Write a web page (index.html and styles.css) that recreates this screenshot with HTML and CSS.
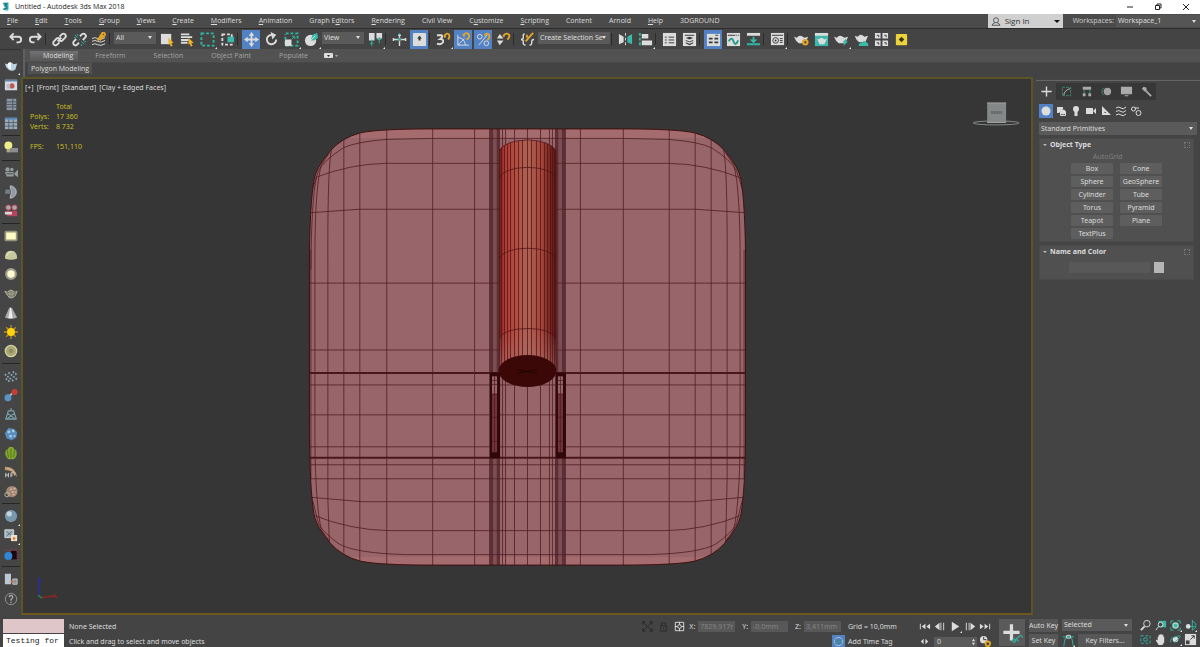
FILE: index.html
```html
<!DOCTYPE html>
<html lang="en">
<head>
<meta charset="utf-8">
<title>Untitled - Autodesk 3ds Max 2018</title>
<link rel="stylesheet" href="styles.css">
</head>
<body>
<header class="titlebar">
  <svg class="logo" viewBox="0 0 12 12"><path d="M2 1h7v8l-2 2H5V9H2l2-3z" fill="#9ad6d6"/><path d="M3 2h4l-2 2.500q3 .5 1.500 3L3 9" fill="none" stroke="#12808c" stroke-width="2"/><path d="M8 1v9" stroke="#35a5ad" stroke-width="1.500"/></svg>
  <h1>Untitled - Autodesk 3ds Max 2018</h1>
  <div class="window-buttons">
    <button aria-label="Minimize"><svg viewBox="0 0 10 10"><path d="M2 5h6" stroke="#222"/></svg></button>
    <button aria-label="Restore"><svg viewBox="0 0 10 10"><path d="M2.500 3.500h4v4h-4zM4 3.500v-1.500h4v4H6.500" fill="none" stroke="#222"/></svg></button>
    <button aria-label="Close"><svg viewBox="0 0 10 10"><path d="M2 2l6 6M8 2l-6 6" stroke="#222"/></svg></button>
  </div>
</header>

<nav class="menubar">
  <div class="menus">
    <button><u>F</u>ile</button><button><u>E</u>dit</button><button><u>T</u>ools</button><button><u>G</u>roup</button><button><u>V</u>iews</button><button><u>C</u>reate</button><button><u>M</u>odifiers</button><button><u>A</u>nimation</button><button>Graph E<u>d</u>itors</button><button><u>R</u>endering</button><button>Civil View</button><button>C<u>u</u>stomize</button><button><u>S</u>cripting</button><button>Content</button><button>Arnold</button><button><u>H</u>elp</button><button>3DGROUND</button>
  </div>
  <button class="signin"><svg viewBox="0 0 12 12"><circle cx="6" cy="4.500" r="3" fill="none" stroke="#444"/><path d="M1.500 10.500q0-2 3-3M10.500 10.500q0-2-3-3M1 10.500h10" fill="none" stroke="#444"/></svg><span>Sign In</span><i class="caret"></i></button>
  <label class="workspaces" for="ws">Workspaces:</label>
  <span class="drop ws"><select id="ws"><option>Workspace_1</option></select></span>
</nav>

<div class="toolbar">
  <button aria-label="Undo"><svg viewBox="0 0 16 16"><path class="l2" d="M3 5h8q3 0 3 3t-3 3H9M6 1.500L2.500 5 6 8.500"/></svg></button>
  <button aria-label="Redo"><svg viewBox="0 0 16 16"><path class="l2" d="M13 5H5Q2 5 2 8t3 3h2M10 1.500L13.500 5 10 8.500"/></svg></button>
  <i class="sep"></i>
  <button aria-label="Link"><svg viewBox="0 0 16 16"><path class="l2" d="M8 5l2.500-2.500a2.300 2.300 0 0 1 3.500 3.500L11 9a2.300 2.300 0 0 1-3 0M8 11l-2.500 2.500A2.300 2.300 0 0 1 2 10L5 7a2.300 2.300 0 0 1 3 0M6 10l4-4"/></svg></button>
  <button aria-label="Unlink"><svg viewBox="0 0 16 16"><path class="l2" d="M8.500 4.500l2-2a2.300 2.300 0 0 1 3.500 3.500l-2.500 2.500M7.500 11.500l-2 2A2.300 2.300 0 0 1 2 10l2.500-2.500"/><path class="t" d="M3 3l3 3M6 2v2M2 6h2M10 10l3 3M10 13v2M13 10h2M7 9l2-2"/></svg></button>
  <button aria-label="Bind to Space Warp"><svg viewBox="0 0 16 16"><path class="l" d="M0 7q3-2 6 0t8-1M0 10q3-2 6 0t8-1M0 13.500q3-2 6 0t8-1"/><path class="y" d="M6 9l5-8q3-1 3 2L8 9M9 6l3-3"/></svg></button>
  <i class="sep"></i>
  <span class="drop w44"><select aria-label="Selection Filter"><option>All</option></select></span>
  <button aria-label="Select Object"><svg viewBox="0 0 16 16"><path class="f" d="M1 2h11v11H1z"/><path class="fy" d="M9 6l5.500 5.500-2.500.500 1.500 3-2 .5-1-3-1.500 1z"/></svg></button>
  <button aria-label="Select by Name"><svg viewBox="0 0 16 16"><path class="l2" d="M1 2.500h9M1 5.500h12M1 8.500h8M1 11.500h7"/><path class="fy" d="M9 6l5.500 5.500-2.500.500 1.500 3-2 .5-1-3-1.500 1z"/></svg></button>
  <button class="fly" aria-label="Selection Region"><svg viewBox="0 0 16 16"><path class="t dash" d="M1.500 1.500h13v13h-13z"/></svg></button>
  <button aria-label="Window Crossing"><svg viewBox="0 0 16 16"><path class="l dash" d="M2.500 2.500h10v11h-10z"/><path class="ft" d="M8 5h7v6H8z"/></svg></button>
  <i class="sep"></i>
  <button class="on" aria-label="Move"><svg viewBox="0 0 16 16"><path class="l2" d="M8 3v10M3 8h10"/><path class="f" d="M8 0l3 4H5zM8 16l3-4H5zM0 8l4-3v6zM16 8l-4-3v6z"/></svg></button>
  <button aria-label="Rotate"><svg viewBox="0 0 16 16"><path class="l2" d="M10 3.500A5 5 0 1 0 13 8"/><path class="f" d="M7 0l6 3-4 5z"/></svg></button>
  <button class="fly" aria-label="Scale"><svg viewBox="0 0 16 16"><path class="t dash" d="M2 1.500h12.500v13h-13V2"/><path class="f" d="M1 8h7v7H1z"/><path class="t" d="M8 8l3-3M8.500 4.500h3v3"/></svg></button>
  <button class="fly" aria-label="Place"><svg viewBox="0 0 16 16"><circle class="f" cx="7" cy="9" r="6"/><path class="ft" d="M7 9l2-6 5-2 1 5-4 3z"/><path class="l" d="M7 9l5-5"/></svg></button>
  <span class="drop w44"><select aria-label="Reference Coordinate System"><option>View</option></select></span>
  <button class="fly" aria-label="Pivot Center"><svg viewBox="0 0 16 16"><path class="f" d="M1 1h6v8H1zM9 1h6v6H9z"/><path class="t" d="M4 8v7M2 12h4M12 5v7M10 8h4"/></svg></button>
  <i class="sep"></i>
  <button aria-label="Manipulate"><svg viewBox="0 0 16 16"><path class="l" stroke-width="1.500" d="M8 2v13M1 8h14M6.500 3.500h3M1.500 6.500v3M14.500 6.500v3"/><path class="t" d="M8 6v4M6 8h4M8 1v2"/></svg></button>
  <button class="on" aria-label="Keyboard Shortcut Override"><svg viewBox="0 0 16 16"><rect class="f" x="1" y="1" width="14" height="14" rx="1"/><path d="M8 4l2.500 3H9v2H7V7H5.500z" fill="#333"/></svg></button>
  <i class="sep"></i>
  <button class="fly" aria-label="Snaps Toggle"><svg viewBox="0 0 16 16"><path class="l2" d="M1 3.500h5Q8 5 4.500 7.500q4 0 3 3.500-2 3-6.500 1.500"/><path class="y" d="M10 6l-1-2q3-4 5-1 1 2-1 5"/></svg></button>
  <button class="on" aria-label="Angle Snap"><svg viewBox="0 0 16 16"><path class="l" d="M2 3v11h12M2 6q7 0 8 8M2 14l7-7"/><path class="y" d="M9 5l-1-2q3-3 5-1t0 5l-2 1"/></svg></button>
  <button class="on" aria-label="Percent Snap"><svg viewBox="0 0 16 16"><circle class="l" cx="4" cy="5" r="2.500"/><circle class="l" cx="11" cy="12" r="2.500"/><path class="l" d="M12 3L3 14"/><path class="y" d="M9 4q2-4 5-1 1 3-2 6"/></svg></button>
  <button aria-label="Spinner Snap"><svg viewBox="0 0 16 16"><path class="f" d="M4 2l4 5H1zM4 14l4-5H1z"/><path class="y" d="M9 5l-1-1q3-4 6-1 1 3-2 5"/></svg></button>
  <i class="sep"></i>
  <button aria-label="Named Selection Sets"><svg viewBox="0 0 16 16"><path class="l" stroke-width="1.500" d="M5 2Q3 2 3.500 5T1 8q3 0 2.500 3T6 14M10 14q3 0 2.500-3T15 8"/><path class="y" d="M6 10l6-7 2-2M8 6l-1-3"/></svg></button>
  <span class="drop w74"><select aria-label="Named Selection"><option>Create Selection Se</option></select></span>
  <i class="sep"></i>
  <button aria-label="Mirror"><svg viewBox="0 0 16 16"><path class="f" d="M1 2l5 3v6l-5 2z"/><path class="ft" d="M15 2l-5 3v6l5 2z"/><path class="l" stroke-dasharray="3 2" d="M8 1v14"/></svg></button>
  <button class="fly" aria-label="Align"><svg viewBox="0 0 16 16"><path class="t dash" d="M2 1v14"/><path class="f" d="M4 2h7v5H4zM4 9h11v5H4z"/></svg></button>
  <i class="sep"></i>
  <button aria-label="Scene Explorer"><svg viewBox="0 0 16 16"><path class="f" d="M1 1h14v14H1z"/><path class="k" d="M3 5.500h2M7 5.500h6M3 8.500h2M7 8.500h6M3 11.500h2M7 11.500h6"/></svg></button>
  <button aria-label="Layer Explorer"><svg viewBox="0 0 16 16"><path class="f" d="M1 1h14v14H1z"/><path class="k" d="M3 3.500h10"/><path d="M8 5l4 1.500L8 8 4 6.500zM4 8.500L8 10l4-1.500v1L8 11 4 9.500zM4 11l4 1.500 4-1.500v1L8 14l-4-2z" fill="#383838"/></svg></button>
  <i class="sep"></i>
  <button class="on" aria-label="Toggle Ribbon"><svg viewBox="0 0 16 16"><path class="f" d="M1 2h14v13H1z"/><path class="k2" d="M3 7h4M9 7h4M3 11h4M9 11h4"/><path class="k" d="M10 3.500h3"/></svg></button>
  <button aria-label="Curve Editor"><svg viewBox="0 0 16 16"><path class="f" d="M1 1h14v14H1z"/><path class="k" stroke-dasharray="8 1 1 1" d="M2 3.500h12"/><path d="M3 10q3-6 5 0t5-1" fill="none" stroke="#20998a" stroke-width="2"/></svg></button>
  <button aria-label="Schematic View"><svg viewBox="0 0 16 16"><path class="f" d="M1 1h14v3H1z"/><path class="t2" d="M8 5v4M1 13h14"/><path class="ft" d="M4 8h8l-4 4z"/></svg></button>
  <i class="sep"></i>
  <button class="fly" aria-label="Material Editor"><svg viewBox="0 0 16 16"><path class="f" d="M1 1h14v13H1z"/><path class="k" d="M2 3.500h12M10.500 7h3M10.500 9h3M10.500 11h3"/><circle class="k" cx="6" cy="9" r="3"/><circle cx="6" cy="9" r="1" fill="#333"/></svg></button>
  <i class="sep"></i>
  <button aria-label="Render Setup"><svg viewBox="0 0 16 16"><path class="f" d="M0 5l3 1q3-4 8 0l4-1-3 7H5Q2 10 0 5z"/><circle cx="12" cy="11" r="3.500" fill="#dda52c"/><circle cx="12" cy="11" r="1.200" fill="#444"/></svg></button>
  <button aria-label="Rendered Frame"><svg viewBox="0 0 16 16"><path class="ft" d="M1 1h14v14H1z"/><path class="f" d="M1 1h14v3H1zM3 7l2 1q3-3 6 0l3-1-3 6H6z"/></svg></button>
  <button class="fly" aria-label="Render Production"><svg viewBox="0 0 16 16"><path class="f" d="M0 5l3 1q3-4 8 0l4-1-3 7H5Q2 10 0 5z"/><path class="ft" d="M13 7l-4 4h2l-1 4 5-5h-2z"/></svg></button>
  <button aria-label="Cloud Render"><svg viewBox="0 0 16 16"><path class="f" d="M1 4l3 1q3-4 7 0l4-1-3 7H6Q2 9 1 4z"/><path class="ft" d="M5 15q0-4 3-3 2-4 5-1 3 1 2 4z"/></svg></button>
  <button aria-label="Autodesk Gallery"><svg viewBox="0 0 16 16"><path class="f" d="M1 1h6v6H1zM9 1h6v6H9zM1 9h6v6H1zM9 9h6v6H9z"/><path class="k" d="M3 3.500h2v2M11 3.500h2v2M3 11.500h2v2M11 11.500h2v2"/></svg></button>
  <button aria-label="Arnold Plugin"><svg viewBox="0 0 16 16"><rect x="2" y="2" width="12" height="12" rx="1" fill="#ecd33c"/><path d="M8 5l3 3-3 3-3-3z" fill="#3a3410"/></svg></button>
</div>

<main class="workspace">
  <aside class="sidebar">
    <button class="fly" aria-label="Teapot"><svg viewBox="0 0 16 16"><path d="M1 5l3 1q4-4 7 0l4-1-2 7q-4 3-8 0-3-2-4-7z" fill="#bcd3e4"/><path d="M4 6q1-3 4-2v8q-4-1-4-6z" fill="#f6f9fb"/></svg></button>
    <button aria-label="Render Frame"><svg viewBox="0 0 16 16"><path d="M1 2h14v12H1z" fill="#d5dbe0"/><path d="M1 2h14v2H1z" fill="#6385ab"/><circle cx="9" cy="9" r="3" fill="#c45850"/><path d="M3 7h4v5H3z" fill="#b7bfc7"/></svg></button>
    <button aria-label="List"><svg viewBox="0 0 16 16"><path d="M3 2h11v13H3z" fill="#8b97a5"/><path d="M3 5.500h11M3 8.500h11M3 11.500h11M10 2v13" stroke="#47525d"/></svg></button>
    <button aria-label="Table"><svg viewBox="0 0 16 16"><path d="M1 2h14v13H1z" fill="#9cabb8"/><path d="M1 2h14v2H1z" fill="#4f87bb"/><path d="M1 7.500h14M1 11.500h14M5.500 4v11M10.500 4v11" stroke="#4e5d6c"/></svg></button>
    <i class="hsep"></i>
    <button aria-label="Light"><svg viewBox="0 0 16 16"><circle cx="5" cy="5" r="4.500" fill="#eeed8c"/><path d="M3 9h4v4H3z" fill="#a9a986"/><path d="M7 8h9v5H7z" fill="#8d8d8d"/></svg></button>
    <i class="hsep"></i>
    <button aria-label="Camera"><svg viewBox="0 0 16 16"><g fill="#939b9b"><circle cx="4" cy="5" r="2.500"/><circle cx="9" cy="5" r="2"/><path d="M1 8h10v5H3zM12 9l4-4v9l-4-3z"/></g><path d="M3 10h7" stroke="#444"/></svg></button>
    <button aria-label="Dome Camera"><svg viewBox="0 0 16 16"><path d="M7 1a7 7 0 0 1 0 14q3-7 0-14z" fill="#9299a2" stroke="#c4c9ce"/><path d="M2 5h5v5H1z" fill="#777f86"/></svg></button>
    <button aria-label="Red Camera"><svg viewBox="0 0 16 16"><circle cx="5" cy="4" r="3" fill="#aaa" stroke="#c3405c"/><circle cx="12" cy="4" r="3" fill="#aaa" stroke="#c3405c"/><path d="M1 8h14v6H4z" fill="#b5455f"/><path d="M1 9h8v3H1z" fill="#d9d9d9"/></svg></button>
    <i class="hsep"></i>
    <button aria-label="Plane Light"><svg viewBox="0 0 16 16"><rect x="1.500" y="3" width="13" height="10" rx="1" fill="#fdfcc5" stroke="#97947a" stroke-width="2"/></svg></button>
    <button aria-label="Dome Light"><svg viewBox="0 0 16 16"><path d="M1 12q0-9 7-9t7 9q-7 3-14 0z" fill="#c6c99c"/><path d="M3 9q2-5 6-5" stroke="#eff0c8" fill="none"/></svg></button>
    <button aria-label="Sphere Light"><svg viewBox="0 0 16 16"><circle cx="8" cy="8" r="5.500" fill="#fcfbd2" stroke="#9f9f8e" stroke-width="2.500"/></svg></button>
    <button aria-label="Mesh Light"><svg viewBox="0 0 16 16"><path d="M1 6l3 1q4-4 8 0l3-1-2 5q-5 5-9 0z" fill="#65675b" stroke="#b8b89d"/><path d="M6 5v9M8 4v10M10 5v9M3 9h10" stroke="#aaa98e"/></svg></button>
    <button aria-label="Cone Light"><svg viewBox="0 0 16 16"><path d="M6 2h3l6 11q-7 3-14 0z" fill="#a9a9a9"/><path d="M7 2h1l2 12H5z" fill="#eee"/></svg></button>
    <button aria-label="Sun"><svg viewBox="0 0 16 16"><path d="M8 0v16M0 8h16M2.500 2.500l11 11M13.500 2.500l-11 11" stroke="#bf8e1d" stroke-width="1.500"/><circle cx="8" cy="8" r="4.500" fill="#ffd40c"/></svg></button>
    <button aria-label="Ambient Light"><svg viewBox="0 0 16 16"><circle cx="8" cy="8" r="6.500" fill="#aaa777" stroke="#d4d0a0" stroke-width="1.500"/><circle cx="8" cy="8" r="2.500" fill="#8f8c60"/></svg></button>
    <i class="hsep"></i>
    <button aria-label="Particles"><svg viewBox="0 0 16 16"><path d="M1 6l10 8M5 4l10 8M2 11l5 4M10 3l5 4" stroke="#8aaabc" stroke-width="2" stroke-dasharray="2 1.500"/></svg></button>
    <button aria-label="Constraint"><svg viewBox="0 0 16 16"><path d="M5 10l6-5" stroke="#b9bfc8" stroke-width="2"/><circle cx="4.500" cy="11" r="4" fill="#5c93c5"/><circle cx="12" cy="4.500" r="3.500" fill="#c73c35"/></svg></button>
    <button aria-label="Bones"><svg viewBox="0 0 16 16"><path d="M8 1v3M5 4.500h6l3 9H2zM4 7l8 6M12 7l-8 6M2 14h12" fill="none" stroke="#7ba0ad" stroke-width="1.300"/></svg></button>
    <button aria-label="Cluster"><svg viewBox="0 0 16 16"><path d="M5 1l6 1 4 4-1 6-5 3-6-2-2-6z" fill="#598bbb"/><path d="M4 4h3v3H4zM9 3h3v3H9zM6 9h3v3H6zM11 9h2v2h-2z" fill="#a5c9e3"/></svg></button>
    <button aria-label="Grass"><svg viewBox="0 0 16 16"><path d="M5 15Q0 11 2 5l2-1 2-3h4l2 3 2 1q2 7-3 10z" fill="#82a82f"/><path d="M8 14V3M5 13L4 5M11 13l1-8" stroke="#4b6b18"/></svg></button>
    <button aria-label="Hair"><svg viewBox="0 0 16 16"><path d="M1 2q12-1 14 12l-2-3-1 2Q10 5 1 6z" fill="#b6956c"/><path d="M3 4q8 1 10 7" fill="none" stroke="#dcc09c"/><path d="M2 9v5M5 9v5M2 11.500h3M8 14V9h3M8 11.500h2" stroke="#ddd" fill="none"/></svg></button>
    <button aria-label="Ornatrix"><svg viewBox="0 0 16 16"><circle cx="9" cy="7.500" r="6.500" fill="#a48773"/><path d="M7 5h2M11 4h2M9 8h2M13 8h1M10 11h2" stroke="#dbc3b0" stroke-width="1.500"/><circle cx="3.500" cy="11" r="2.500" fill="none" stroke="#c4bfb0"/></svg></button>
    <i class="hsep"></i>
    <button class="fly" aria-label="Material Sphere"><svg viewBox="0 0 16 16"><circle cx="8" cy="8" r="7" fill="#7898ac"/><circle cx="6" cy="5.500" r="3" fill="#c0d5e0"/></svg></button>
    <button class="fly" aria-label="Lock"><svg viewBox="0 0 16 16"><path d="M1 2h10v9H1z" fill="#a5b7c3" stroke="#dadada"/><path d="M3 4l6 5M9 4L3 9" stroke="#526370"/><path d="M8 8h7v7H8z" fill="#eee0c8"/><circle cx="11.500" cy="12" r="1.500" fill="#d67627"/></svg></button>
    <button aria-label="Region"><svg viewBox="0 0 16 16"><path d="M8 3h7v10H8z" fill="#1c090d"/><path d="M1 2.500h14v11" stroke="#a53b53" fill="none" stroke-dasharray="2 1"/><circle cx="5" cy="9" r="4.500" fill="#3187d4"/></svg></button>
    <i class="hsep"></i>
    <button aria-label="Panels"><svg viewBox="0 0 16 16"><path d="M1 2h7v12H1z" fill="#b9c8d2"/><path d="M10 8h5v6h-5z" fill="#8b939b" stroke="#ccc"/><circle cx="9" cy="11" r="1.500" fill="#c96b36"/></svg></button>
    <button aria-label="Help"><svg viewBox="0 0 16 16"><circle cx="8" cy="8" r="6.500" fill="none" stroke="#999"/><path d="M6 6q0-2 2-2t2 2q0 1-2 2.500V10M8 11v1.500" fill="none" stroke="#aaa" stroke-width="1.500"/></svg></button>
  </aside>

  <section class="ribbon">
    <div class="tabs">
      <button class="active">Modeling</button><button>Freeform</button><button>Selection</button><button>Object Paint</button><button>Populate</button>
      <button class="minimize" aria-label="Minimize Ribbon"><svg viewBox="0 0 16 8"><rect class="f" x="1" y="1" width="9" height="5" rx="1"/><path d="M4 3h3L5.500 5z" fill="#333"/><path d="M12 3h3l-1.500 2z" fill="#aaa"/></svg></button>
    </div>
    <div class="subtabs"><button>Polygon Modeling</button></div>
  </section>

  <section class="viewport">
    <svg class="scene" viewBox="23 79 1008 535" preserveAspectRatio="xMidYMid meet">
      <defs>
        <clipPath id="body"><path d="M309 270Q309 205 314 178 317 166 330 151 341 138 360 133 378 129 433 129H622Q677 129 695 133 714 138 725 151 738 166 741 178 746 205 746 270V425Q746 490 741 517 738 529 725 544 714 557 695 562 677 566 622 566H433Q378 566 360 562 341 557 330 544 317 529 314 517 309 490 309 425z"/></clipPath>
        <linearGradient id="pole"><stop offset="0" stop-color="#6e1f1c"/><stop offset=".1" stop-color="#b23c34"/><stop offset=".5" stop-color="#ae6254"/><stop offset=".75" stop-color="#a6453b"/><stop offset="1" stop-color="#5c1614"/></linearGradient>
        <linearGradient id="tip" x2="0" y2="1"><stop offset="0" stop-color="#a87070" stop-opacity="0"/><stop offset="1" stop-color="#a87070" stop-opacity=".7"/></linearGradient>
      </defs>
      <g clip-path="url(#body)">
        <path d="M309 129h437v437H309z" fill="#98666a"/>
        <path d="M309 129h437v9H309zM309 558h437v8H309z" fill="#ac6f72" opacity=".6"/>
        <g class="mesh">
          <path d="M343.500 129V566M359.500 129V566M386.500 129V566M432.500 129V566M474.500 129V566M580.500 129V566M623.500 129V566M669.500 129V566M695.500 129V566M711.500 129V566"/>
          <path d="M505.500 129V566M514.500 129V566M527.500 129V566M540.500 129V566M549.500 129V566M552.500 129V566M502.500 129V566"/>
          <path d="M310.500 270Q311 200 316 178M314.500 440V250Q315 185 321 165L329 153M327.500 500V270Q327 170 331 150M310.500 250V480M314.500 440Q315 505 321 531L329 542M327.500 500L329 544M744.500 250V480M740.500 440V250Q740 185 734 165L726 153M727.500 480V270Q728 170 724 150M740.500 440Q740 505 734 531L726 542M727.500 480L726 544"/>
          <path d="M432 138.500H623M432 138.500L386 139.500Q355 142 343 148 324 160 318 171L312 190M623 138.500L669 139.500Q700 142 712 148 731 160 737 171L743 190"/>
          <path d="M386 163.500H669M386 163.500Q350 164 314 178M669 163.500Q705 164 741 178"/>
          <path d="M359 209.500H696M359 209.500L310 213M696 209.500L746 213M309 283.500H746M309 350.500H746M309 385.500H746M309 415.500H746M309 447.500H746M309 465.500H746M309 479.500H746"/>
          <path d="M362 502.500H693M362 502.500L309 498M693 502.500L746 498M390 531.500H665M390 531.500Q350 531 313 516M665 531.500Q705 531 742 516"/>
          <path d="M405 555.500H650M405 555.500Q355 554 339 545 322 533 318 524L312 500M650 555.500Q700 554 716 545 733 533 737 524L743 500"/>
        </g>
        <path d="M489 129h4v437h-4zM496.500 129h3.500v437h-3.500zM555 129h3.500v437H555zM562 129h4v437h-4z" fill="#471e25" opacity=".75"/>
        <path d="M493 129h3.500v437H493zM558.500 129h3.500v437h-3.500z" fill="#66323a" opacity=".5"/>
        <path d="M309 373.500H746M309 458.500H746" stroke="#4b171b" stroke-width="2"/>
      </g>
      <path class="outline" d="M309 270Q309 205 314 178 317 166 330 151 341 138 360 133 378 129 433 129H622Q677 129 695 133 714 138 725 151 738 166 741 178 746 205 746 270V425Q746 490 741 517 738 529 725 544 714 557 695 562 677 566 622 566H433Q378 566 360 562 341 557 330 544 317 529 314 517 309 490 309 425z"/>
      <path d="M490 373h10v86h-10zM556 373h10v86h-10z" fill="#300809"/>
      <path d="M492 377h5v76h-5zM558 377h5v76h-5z" fill="#70343a"/>
      <path d="M492 377h5v17h-5zM558 377h5v17h-5z" fill="#97646a"/>
      <path class="mesh" d="M494.500 377v76M560.500 377v76M492 381h5M492 385h5M492 395h5M492 418h5M492 442h5M558 381h5M558 385h5M558 395h5M558 418h5M558 442h5"/>
      <path d="M499 151Q504 141 527.500 140 551 141 556 151V372H499z" fill="url(#pole)"/>
      <path d="M499 338Q527 320 556 338V372H499z" fill="url(#tip)"/>
      <g class="ribs">
        <path d="M499.500 150V370M501.500 148V370M504.500 146V370M507.500 144V370M510.500 143V370M514.500 142V370M518.500 141V370M522.500 140V370M527.500 140V370M531.500 140V370M536.500 141V370M540.500 142V370M544.500 143V370M547.500 144V370M550.500 146V370M552.500 147V370M554.500 149V370M556 151V370"/>
        <path d="M499 151Q504 141 527.500 140 551 141 556 151M499 178Q504 168 527.500 167.500 551 168 556 178M499 259Q504 249 527.500 248.500 551 249 556 259M499 339Q504 329 527.500 329 551 329 556 339"/>
      </g>
      <ellipse cx="527.500" cy="371.500" rx="29" ry="16" fill="#3b0707"/>
      <path d="M517 370l20 4M517 374l20-4" stroke="#210303"/>
      <g><ellipse cx="997" cy="123" rx="23" ry="2" fill="none" stroke="#85898a"/><path d="M988 103h19v20h-19z" fill="#858888"/><path d="M988 103h19M988 122.500h19" stroke="#a2a4a4"/><path d="M992 112.500h11" stroke="#656969" stroke-width="3" stroke-dasharray="2 .5"/></g>
      <g fill="none" stroke-width="1.500"><path d="M38 598V581M37 579l3 3" stroke="#2c2ca0"/><path d="M40 599l4-1 11-1M53 595l3 4" stroke="#8b2424"/><path d="M37 596l4 3" stroke="#2b8040"/></g>
    </svg>
    <div class="view-labels"><button>[+]</button><button>[Front]</button><button>[Standard]</button><button>[Clay + Edged Faces]</button></div>
    <table class="stats">
      <tr><th></th><td>Total</td></tr>
      <tr><th>Polys:</th><td>17 360</td></tr>
      <tr><th>Verts:</th><td>8 732</td></tr>
      <tr><th></th><td></td></tr>
      <tr><th>FPS:</th><td>151,110</td></tr>
    </table>
  </section>

  <aside class="panel">
    <div class="panel-tabs">
      <button class="current" aria-label="Create"><svg viewBox="0 0 14 14"><path class="l" stroke-width="1.500" d="M7 1.500v11M1.500 7h11"/></svg></button>
      <button aria-label="Modify"><svg viewBox="0 0 14 14"><path d="M2.500 2.500h9v9h-9z" fill="none" stroke="#3a8a76" stroke-dasharray="3 1"/><path d="M4 11q1-6 7-7" fill="none" stroke="#bbb"/></svg></button>
      <button aria-label="Hierarchy"><svg viewBox="0 0 14 14"><path d="M3 2h9v3H3zM3 9h3v3H3zM9 9h3v3H9z" fill="#aaa"/><path d="M4.500 5v4M10.500 5v4" stroke="#44937d"/></svg></button>
      <button aria-label="Motion"><svg viewBox="0 0 14 14"><circle cx="8" cy="7" r="4" fill="#a2a2a2"/><path d="M4 3Q0 7 4 11" stroke="#3a8a76" fill="none"/></svg></button>
      <button aria-label="Display"><svg viewBox="0 0 14 14"><path d="M1 2h12v8H1zM5 11h4v1H5z" fill="#aaa"/></svg></button>
      <button aria-label="Utilities"><svg viewBox="0 0 14 14"><path d="M3 3l2 2M5 5l7 7" stroke="#aaa" stroke-width="2"/><path d="M2 4l2-2 3 1v3l-2 1z" fill="#aaa"/></svg></button>
    </div>
    <div class="categories">
      <button class="on" aria-label="Geometry"><svg viewBox="0 0 14 14"><circle class="f" cx="7" cy="7" r="4.500"/></svg></button>
      <button aria-label="Shapes"><svg viewBox="0 0 14 14"><path class="f" d="M3 3h6v2L5 9H3z"/><path class="l" d="M6.500 7.500h5v4h-5z"/><circle class="f" cx="9" cy="8" r="2.500"/></svg></button>
      <button aria-label="Lights"><svg viewBox="0 0 14 14"><circle class="f" cx="7" cy="5" r="3"/><path class="f" d="M5.500 7h3v5h-3z"/></svg></button>
      <button aria-label="Cameras"><svg viewBox="0 0 14 14"><path class="f" d="M2 4h7v6H2zM9 7l3-3v6z"/></svg></button>
      <button aria-label="Helpers"><svg viewBox="0 0 14 14"><path d="M3 2v9h9zM5.500 7.500v1.500h2z" class="f" fill-rule="evenodd"/></svg></button>
      <button aria-label="Space Warps"><svg viewBox="0 0 14 14"><path class="l" d="M2 4q3-2 5 0t5-1M2 7.500q3-2 5 0t5-1M2 11q3-2 5 0t5-1"/></svg></button>
      <button aria-label="Systems"><svg viewBox="0 0 14 14"><circle class="l" cx="4.500" cy="5" r="2"/><circle class="l" cx="9.500" cy="9" r="2.500"/><path class="l" d="M6 4h4"/></svg></button>
    </div>
    <span class="drop prim"><select aria-label="Category"><option>Standard Primitives</option></select></span>
    <section class="rollout">
      <h2>Object Type</h2>
      <p class="autogrid">AutoGrid</p>
      <div class="types"><button>Box</button><button>Cone</button><button>Sphere</button><button>GeoSphere</button><button>Cylinder</button><button>Tube</button><button>Torus</button><button>Pyramid</button><button>Teapot</button><button>Plane</button><button>TextPlus</button></div>
    </section>
    <section class="rollout">
      <h2>Name and Color</h2>
      <div class="name-row"><input type="text" aria-label="Object name"><button class="swatch" aria-label="Object color"></button></div>
    </section>
  </aside>
</main>

<footer class="status">
  <div class="listener"><input class="pink" type="text" aria-label="Macro recorder"><input type="text" aria-label="Listener" value="Testing for 2"></div>
  <div class="messages"><p>None Selected</p><p>Click and drag to select and move objects</p></div>
  <div class="coords">
    <div class="line">
      <button aria-label="Isolate"><svg viewBox="0 0 14 14"><path d="M2 5V2h3M9 2h3v3M12 9v3H9M5 12H2V9M2 2l10 10M12 2L2 12" fill="none" stroke="#262626"/></svg></button>
      <button aria-label="Lock Selection"><svg viewBox="0 0 14 14"><path d="M4 6h6v6H4zM5 6V3h4v3M7 8v2" fill="none" stroke="#2a2a2a"/></svg></button>
      <button aria-label="Absolute Mode"><svg viewBox="0 0 14 14"><path class="l" d="M2.500 2.500h9v9h-9zM7 2v3M7 9v3M2 7h3M9 7h3"/><circle class="l" cx="7" cy="7" r="2"/></svg></button>
      <label for="cx">X:</label><input id="cx" type="text" value="7829,917mm">
      <label for="cy">Y:</label><input id="cy" type="text" value="-0,0mm">
      <label for="cz">Z:</label><input id="cz" type="text" value="3,411mm">
      <span class="grid-size">Grid = 10,0mm</span>
    </div>
    <div class="line end"><button class="on" aria-label="Time Tag"><svg viewBox="0 0 14 14"><circle cx="7" cy="7" r="4.500" fill="none" stroke="#b3c8cf"/><path d="M3 5q4 3 8 0M3 9h8" stroke="#398a87" fill="none"/></svg></button><button class="tag">Add Time Tag</button></div>
  </div>
  <div class="transport">
    <div class="line">
      <button aria-label="Go to Start"><svg viewBox="0 0 14 14"><path class="f" d="M2 4h1v6H2zM8 4v6L4 7zM13 4v6L9 7z"/></svg></button>
      <button aria-label="Previous Frame"><svg viewBox="0 0 14 14"><path class="f" d="M7 3v8L2 7zM8 3h1v8H8zM11 3h1v8h-1z"/></svg></button>
      <button class="fly" aria-label="Play"><svg viewBox="0 0 14 14"><path class="f" d="M3 2l8 5-8 5z"/></svg></button>
      <button aria-label="Next Frame"><svg viewBox="0 0 14 14"><path class="f" d="M2 3h1v8H2zM5 3h1v8H5zM7 3v8l5-4z"/></svg></button>
      <button aria-label="Go to End"><svg viewBox="0 0 14 14"><path class="f" d="M1 4v6l4-3zM6 4v6l4-3zM11 4h1v6h-1z"/></svg></button>
    </div>
    <div class="line">
      <button aria-label="Key Mode"><svg viewBox="0 0 14 14"><path class="f" d="M6 4v6L3 7zM8 4v6l3-3z"/></svg></button>
      <span class="frame"><input type="text" aria-label="Current frame" value="0"><svg class="spin" viewBox="0 0 6 10"><path class="f" d="M3 1l2 3H1zM3 9l2-3H1z"/></svg></span>
      <button aria-label="Time Configuration"><svg viewBox="0 0 14 14"><circle class="f" cx="5" cy="5" r="4"/><path class="k" d="M5 2v3h3"/><circle cx="9.500" cy="9.500" r="2.500" fill="none" stroke="#dba42c" stroke-width="2"/></svg></button>
    </div>
  </div>
  <button class="setkeys" aria-label="Set Keys"><svg viewBox="0 0 24 24"><path class="f" d="M10 4h3v6h6v3h-6v6h-3v-6H4v-3h6z"/><path class="t" d="M14 19l6-5 2 2M16 17l2 3"/><circle class="t" cx="14" cy="19" r="1.500"/></svg></button>
  <div class="keys">
    <button class="btn">Auto Key</button><span class="drop"><select aria-label="Key set"><option>Selected</option></select></span>
    <button class="btn">Set Key</button><div class="filters"><button class="fly" aria-label="Tangent"><svg viewBox="0 0 14 14"><path class="t" d="M2 13Q3 3 5 3h4q2 0 3 10M1 3h12"/><path class="l" d="M5 1.500h4v3H5z"/></svg></button><button class="btn">Key Filters...</button></div>
  </div>
  <div class="nav">
    <button aria-label="Zoom"><svg viewBox="0 0 14 14"><circle class="l" cx="8.500" cy="5" r="3.500"/><path class="l2" d="M6 8l-4 4"/></svg></button>
    <button aria-label="Zoom All"><svg viewBox="0 0 14 14"><path class="ft" d="M5 2h8v7H5z"/><circle cx="7" cy="6" r="2.500" fill="#444" stroke="#dcdcdc"/><path class="l" d="M5 8l-3 4"/></svg></button>
    <button class="fly" aria-label="Zoom Extents"><svg viewBox="0 0 14 14"><path class="t" d="M2 5V2h3M9 2h3v3M12 9v3H9M5 12H2V9"/><circle cx="7" cy="7" r="3.500" fill="#a4d7cd"/><circle class="ft" cx="7" cy="7" r="2"/></svg></button>
    <button class="fly" aria-label="Zoom Extents All"><svg viewBox="0 0 14 14"><path class="t" d="M9 1v11M9 2q4 2 4 5t-4 5M2 8h10"/><circle class="f" cx="4.500" cy="8" r="2.500"/></svg></button>
    <button aria-label="Zoom Region"><svg viewBox="0 0 14 14"><path class="t" stroke-dasharray="3 2" d="M2 3h10v8H2z"/><circle class="t" cx="7" cy="7" r="2"/></svg></button>
    <button aria-label="Pan"><svg viewBox="0 0 14 14"><path class="f" d="M4 4h1V2h2V1h1v1h2v2h1v6l-2 3H5L2 8l1-1 1 1z"/></svg></button>
    <button class="fly" aria-label="Orbit"><svg viewBox="0 0 14 14"><circle class="f" cx="7" cy="7" r="3"/><path class="t" d="M2 10q-2-4 5-6 6-2 5 0t-6 6"/></svg></button>
    <button aria-label="Maximize Viewport"><svg viewBox="0 0 14 14"><path class="f" d="M1 1h12v12H1z"/><path d="M2 8h4v4H2z" fill="#444"/><path class="k" d="M7 7l4-4M8 3h3v3"/></svg></button>
  </div>
</footer>
</body>
</html>
```
FILE: styles.css
```css
* { box-sizing: border-box; }
html, body { height: 100%; margin: 0; }
body {
  display: flex;
  flex-direction: column;
  overflow: hidden;
  background: #444;
  color: #dcdcdc;
  font: 7px/10px "Noto Sans", "Open Sans", sans-serif;
}
h1, h2, p { margin: 0; font: inherit; }
button, select, input {
  margin: 0;
  padding: 0;
  border: 0;
  border-radius: 0;
  background: none;
  color: inherit;
  font: inherit;
}
select { appearance: none; width: 100%; height: 100%; padding: 0 10px 0 2px; }
svg { display: block; }

.l, .l2, .t, .t2, .y, .k, .k2 { fill: none; }
.l, .l2 { stroke: #dcdcdc; }
.l2 { stroke-width: 2; }
.t, .t2 { stroke: #2fb5a2; }
.t2 { stroke-width: 2; }
.y { stroke: #e2a52b; stroke-width: 2; }
.k, .k2 { stroke: #383838; }
.k2 { stroke-width: 2; }
.f { fill: #dcdcdc; }
.ft { fill: #3bb9aa; }
.fy { fill: #f0b429; }
.dash { stroke-width: 2; stroke-dasharray: 3 2; }

.fly { position: relative; }
.fly::after {
  content: "";
  position: absolute;
  right: 0;
  bottom: 0;
  border: 1px solid;
  border-color: transparent #eee #eee transparent;
}
.on { background: #5282c4; }

.drop { position: relative; display: block; background: #5a5a5a; }
.drop::after {
  content: "";
  position: absolute;
  right: 4px;
  top: 40%;
  border: 2px solid transparent;
  border-top: 3px solid #ddd;
  border-bottom: 0;
}

/* title bar */
.titlebar { display: flex; align-items: center; flex: 0 0 14px; gap: 4px; padding-left: 1px; background: #fff; color: #222; }
.logo { width: 10px; height: 12px; }
.titlebar h1 { flex: 1; font-family: "Open Sans", sans-serif; }
.window-buttons { display: flex; gap: 18px; padding-right: 9px; }
.window-buttons svg { width: 10px; height: 10px; }

/* menu bar */
.menubar { display: flex; align-items: center; flex: 0 0 15px; background: #4b4b4b; border-bottom: 1px solid #2c2c2c; }
.menus { display: flex; flex: 1; gap: 17px; padding-left: 7px; font-family: "Open Sans", sans-serif; }
.signin { display: flex; align-items: center; gap: 4px; width: 75px; height: 14px; padding: 0 3px; background: #d0d0d0; color: #333; }
.signin svg { width: 10px; height: 11px; }
.signin span { flex: 1; text-align: left; font-size: 8px; font-family: "Open Sans", sans-serif; }
.caret { border: 3px solid transparent; border-top-color: #111; border-bottom: 0; }
.workspaces { padding: 0 2px 0 10px; color: #c8c8c8; }
.ws { width: 84px; height: 12px; background: #555; }

/* main toolbar */
.toolbar { display: flex; align-items: center; flex: 0 0 20px; padding-left: 5px; background: #444; }
.toolbar button { display: flex; align-items: center; justify-content: center; width: 20px; height: 19px; }
.toolbar .on { background: #5282c4 content-box; padding: 0 1px; }
.toolbar svg { width: 15px; height: 15px; }
.sep { width: 4px; height: 12px; border-left: 1px solid #2b2b2b; border-right: 2px solid #444; }
.toolbar .drop { height: 12px; margin-bottom: 3px; border: 0 solid #444; border-width: 0 1px; }
.w44 { width: 44px; }
.w74 { width: 74px; }
.w74 select { padding-right: 0; }

/* workspace */
.workspace { display: grid; grid-template-columns: 21px 1fr 167px; grid-template-rows: 28px 1fr; flex: 1; min-height: 0; }
.sidebar { grid-row: 1 / 3; display: flex; flex-direction: column; justify-content: space-between; padding: 6px 1px 7px 2px; border-top: 1px solid #333; background: #454545; }
.sidebar button { display: flex; align-items: center; justify-content: center; height: 19px; }
.sidebar svg { width: 14px; height: 14px; }
.hsep { height: 5px; border: solid #454545; border-width: 2px 0; background: #252525; }

.ribbon { grid-column: 2 / 4; margin-left: 2px; border-left: 2px solid #606060; background: #434343; }
.tabs { display: flex; align-items: center; gap: 10px; height: 14px; padding: 1px 0 0 5px; background: #525252; border-bottom: 1px solid #484848; color: #a5a5a5; font-family: "Open Sans", sans-serif; }
.tabs button { height: 10px; padding: 0 5px 0 13px; }
.tabs .active { margin-right: -6px; background: linear-gradient(#727272, #585858); color: #dcdcdc; }
.tabs .minimize { padding: 0; }
.minimize svg { width: 16px; height: 8px; }
.subtabs { display: flex; padding: 0 0 0 3px; font-family: "Open Sans", sans-serif; }
.subtabs button { height: 11px; padding: 0 3px; background: #515151; }

/* viewport */
.viewport { position: relative; min-width: 0; border: 2px solid #5b5425; border-bottom-color: #70571f; background: #363636; }
.scene { position: absolute; inset: 0; width: 100%; height: 100%; }
.mesh { fill: none; stroke: #501d21; stroke-width: 1; stroke-opacity: .8; }
.outline { fill: none; stroke: #42100f; stroke-width: 1; }
.ribs { fill: none; stroke: #4e1311; stroke-opacity: .75; }
.view-labels { position: relative; display: flex; gap: 3px; padding: 4px 2px 3px; }
.stats { position: relative; margin: 6px 0 0 7px; border-collapse: collapse; color: #c5bd22; }
.stats th, .stats td { height: 10px; padding: 0; font-weight: 400; text-align: left; }
.stats th { width: 26px; }

/* command panel */
.panel { margin: 3px 0 0 3px; padding: 1px 3px 0; border-top: 1px solid #666; }
.panel-tabs, .categories { display: flex; align-items: center; }
.panel-tabs { width: 120px; height: 17px; margin: 1px 0 0 -3px; background: #373737; }
.panel-tabs button { flex: 1; height: 17px; display: flex; align-items: center; justify-content: center; }
.panel-tabs .current { background: #444; }
.panel-tabs svg { width: 13px; height: 13px; }
.categories { gap: 1px; height: 15px; margin-top: 3px; }
.categories button { width: 14px; height: 14px; }
.categories svg { width: 14px; height: 14px; }
.prim { height: 13px; margin-top: 4px; }
.rollout { margin: 3px 3px 0 0; padding: 1px 3px 2px; border: 1px solid #4a4a4a; background: #505050; }
.rollout h2 { display: flex; align-items: center; gap: 3px; font-weight: 700; }
.rollout h2::before { content: ""; border: 2px solid transparent; border-top-color: #bbb; border-bottom: 0; }
.rollout h2::after { content: ""; width: 4px; height: 4px; margin-left: auto; border: 1px dotted #777; }
.autogrid { padding: 2px 0 2px 50px; line-height: 9px; color: #7f7f7f; }
.types { display: grid; grid-template-columns: 42px 42px; gap: 2px 7px; padding: 0 0 0 28px; }
.types button { height: 11px; background: #5e5e5e; border-radius: 1px; }
.name-row { display: flex; gap: 4px; padding: 5px 0 4px 26px; }
.name-row input { width: 81px; height: 11px; background: #585858; }
.swatch { width: 10px; height: 11px; background: #b5b5b5; }

/* status bar */
.status { display: flex; flex: 0 0 32px; min-height: 0; gap: 4px; padding: 4px 3px 0; background: #444; }
.listener { display: flex; flex-direction: column; gap: 1px; width: 61px; }
.listener input { width: 100%; height: 13px; padding: 0 3px; background: #fff; color: #222; font: 8px/10px "Liberation Mono", monospace; }
.listener .pink { height: 14px; background: #dfc6c9; }
.messages { flex: 1; padding: 3px 1px 0; }
.messages p { margin-bottom: 5px; white-space: nowrap; }
.line { display: flex; align-items: center; height: 15px; white-space: nowrap; }
.status svg { width: 13px; height: 13px; }
.coords .line { gap: 3px; }
.coords input { width: 37px; height: 11px; margin-right: 4px; padding: 0 2px; background: #585858; color: #858585; }
.coords .end { justify-content: flex-end; }
.grid-size, .tag { width: 48px; text-align: left; }
.transport { width: 76px; padding-left: 2px; margin-left: 16px; }
.transport .line { justify-content: space-between; }
.frame { display: flex; align-items: center; flex: 1; min-width: 0; margin: 0 2px 0 3px; padding-right: 1px; background: #5a5a5a; }
.frame input { flex: 1; min-width: 0; height: 10px; padding: 0 3px; }
.status .spin { width: 5px; height: 8px; }
.setkeys { width: 26px; height: 27px; margin-left: 3px; background: #5a5a5a; }
.status .setkeys svg { width: 26px; height: 26px; }
.keys { display: grid; grid-template-columns: 29px 70px; grid-template-rows: 13px 13px; gap: 2px 4px; align-content: start; }
.btn { background: #575757; white-space: nowrap; }
.keys .drop { height: 12px; }
.filters { display: flex; gap: 3px; }
.filters .btn { flex: 1; }
.nav { display: grid; grid-template-columns: repeat(4, 13px); gap: 1px 2px; align-content: start; margin-left: 3px; }
```
